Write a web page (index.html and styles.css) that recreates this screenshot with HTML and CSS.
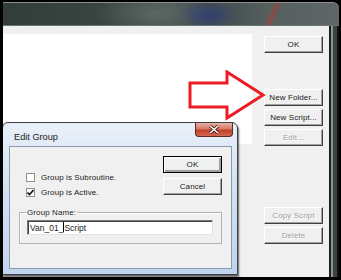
FILE: index.html
```html
<!DOCTYPE html>
<html lang="en">
<head>
  <meta charset="UTF-8" />
  <title>Edit Group</title>
  <link rel="stylesheet" href="styles.css">
</head>
<body>
  <div class="screen">
    <div class="glass"></div>
    <div class="body">
      <div class="client">
        <div class="list"></div>
        <div class="side">
          <button class="btn">OK</button>
          <button class="btn folder">New Folder...</button>
          <button class="btn">New Script...</button>
          <button class="btn" disabled>Edit...</button>
          <button class="btn copy" disabled>Copy Script</button>
          <button class="btn" disabled>Delete</button>
        </div>
      </div>
      <div class="edge"></div>
    </div>

    <!-- annotation arrow -->
    <svg class="arrow" width="80" height="52" viewBox="0 0 80 52">
      <polygon points="2,13 39,13 39,2 75,25 39,48 39,37 2,37" fill="none" stroke="#ec1c24" stroke-width="3" stroke-linejoin="miter" />
    </svg>

    <!-- Edit Group dialog -->
    <div class="dialog">
      <div class="caption">
        <span class="title">Edit Group</span>
        <span class="close">
          <svg width="12" height="9" viewBox="0 0 12 9">
            <path d="M2 1 L10 8 M10 1 L2 8" stroke="#4a1a14" stroke-width="3.2" />
            <path d="M2 1 L10 8 M10 1 L2 8" stroke="#fff" stroke-width="1.6" />
          </svg>
        </span>
      </div>
      <div class="pane">
        <div class="top-row">
          <div class="checks">
            <label class="check"><span class="box"></span>Group is Subroutine.</label>
            <label class="check"><span class="box">
              <svg width="7" height="7" viewBox="0 0 7 7"><path d="M0.5 3.5 L2.5 5.5 L6.5 1" fill="none" stroke="#111" stroke-width="1.6" /></svg>
            </span>Group is Active.</label>
          </div>
          <div class="dlg-buttons">
            <button class="btn default">OK</button>
            <button class="btn">Cancel</button>
          </div>
        </div>
        <fieldset class="group">
          <legend>Group Name:</legend>
          <div class="field">Van_01_<span class="caret"></span>Script</div>
        </fieldset>
      </div>
    </div>
  </div>
</body>
</html>
```

FILE: styles.css
```css
body {
  margin: 0;
  background: #000;
  font-family: 'Liberation Sans', Arial, sans-serif;
  font-size: 8px;
  color: #1a1a1a;
}

.screen {
  position: relative;
  width: 341px;
  height: 280px;
  box-sizing: border-box;
  border: 2px solid #000;
  border-left-width: 3px;
  border-bottom-width: 3px;
  display: flex;
  flex-direction: column;
  overflow: hidden;
  background: #000;
}

.glass {
  height: 22px;
  border-top: 1px solid #8a9090;
  border-radius: 0 6px 0 0;
  background:
    linear-gradient(115deg, transparent 78%, rgba(170, 60, 60, 0.6) 79.5%, transparent 81%),
    radial-gradient(ellipse 30px 14px at 205px 12px, rgba(40, 60, 130, 0.7), transparent),
    radial-gradient(ellipse 60px 20px at 150px 10px, rgba(120, 130, 130, 0.45), transparent),
    linear-gradient(90deg, #313d37 0%, #394540 30%, #4a5451 50%, #414b4c 62%, #56605f 80%, #5f6668 100%);
}

.body {
  flex: 1;
  display: flex;
  border-top: 1px solid #6c7374;
}

.client {
  flex: 1;
  display: flex;
  align-items: flex-start;
  padding-top: 8px;
  background: #f0f0f0;
}

.list {
  width: 249px;
  height: 110px;
  background: #fff;
}

.side {
  width: 59px;
  margin-left: 12px;
  padding-top: 2px;
  display: flex;
  flex-direction: column;
  gap: 3px;
}

.folder {
  margin-top: 33px;
}

.copy {
  margin-top: 58px;
}

.edge {
  width: 10px;
  background: linear-gradient(90deg, #1d2220 0 2px, #8d9592 2px 4px, #3b4441 4px 8px, #111 8px);
}

.btn {
  height: 17px;
  padding: 0;
  box-sizing: border-box;
  border: 1px solid;
  border-color: #fff #404040 #404040 #fff;
  box-shadow: inset -1px -1px #a0a0a0;
  background: #f0f0f0;
  font-family: inherit;
  font-size: 8px;
  letter-spacing: 0.1px;
  color: #1a1a1a;
}

.btn:disabled {
  color: #a0a0a0;
  text-shadow: 1px 1px #fff;
}

.btn.default {
  border-color: #000;
  box-shadow: inset 1px 1px #fff, inset -2px -2px #a0a0a0;
}

.arrow {
  position: absolute;
  left: 185px;
  top: 68px;
}

.dialog {
  position: absolute;
  left: -1px;
  top: 120px;
  width: 236px;
  height: 153px;
  box-sizing: border-box;
  border: 1px solid #3c3f44;
  border-radius: 6px 6px 0 0;
  background: linear-gradient(#e9f0f9, #d3e2f3 40%, #bfd4ee);
  box-shadow: 1px 2px 2px rgba(0, 0, 0, 0.6);
  display: flex;
  flex-direction: column;
  padding: 0 5px 5px 6px;
}

.caption {
  height: 23px;
  display: flex;
  align-items: flex-start;
  justify-content: space-between;
}

.title {
  margin: 9px 0 0 5px;
  font-size: 9.2px;
  color: #1a1a1a;
}

.close {
  width: 38px;
  height: 14px;
  margin-right: -1px;
  box-sizing: border-box;
  border: 1px solid #5a2a22;
  border-top: none;
  border-radius: 0 0 4px 4px;
  background: linear-gradient(#e7b0a3, #d47a68 45%, #c2402a 55%, #d2694f);
  display: flex;
  align-items: center;
  justify-content: center;
}

.pane {
  flex: 1;
  border: 1px solid #8e9aab;
  background: #f0f0f0;
  padding: 0 9px 0 9px;
}

.top-row {
  display: flex;
  justify-content: space-between;
  padding-top: 9px;
}

.checks {
  margin-top: 17px;
  padding-left: 7px;
  display: flex;
  flex-direction: column;
  gap: 6px;
}

.check {
  display: flex;
  align-items: center;
  height: 9px;
  letter-spacing: 0.1px;
}

.box {
  width: 9px;
  height: 9px;
  box-sizing: border-box;
  margin-right: 6px;
  border: 1px solid #8e8f8f;
  background: #fff;
  display: flex;
  align-items: center;
  justify-content: center;
}

.dlg-buttons {
  width: 59px;
  display: flex;
  flex-direction: column;
  gap: 5px;
}

.group {
  margin: 11px 0 0;
  padding: 3px 8px 8px 7px;
  border: 1px solid #b2b2b2;
  box-shadow: inset 1px 1px #fff;
}

.group legend {
  padding: 0 1px;
  margin-left: -1px;
  letter-spacing: 0.1px;
}

.field {
  height: 15px;
  box-sizing: border-box;
  border: 1px solid;
  border-color: #7a7a7a #e3e3e3 #e3e3e3 #7a7a7a;
  box-shadow: inset 1px 1px #404040;
  background: #fff;
  padding: 2px 0 0 2px;
  font-size: 8.5px;
  display: flex;
  align-items: flex-start;
}

.caret {
  width: 1px;
  height: 10px;
  background: #000;
  margin-top: -1px;
}
```
